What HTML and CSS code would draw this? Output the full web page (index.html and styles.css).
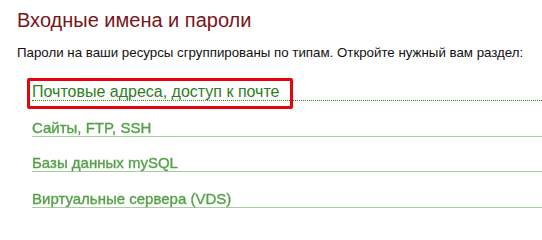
FILE: index.html
```html
<!DOCTYPE html>
<html lang="ru">
<head>
<meta charset="utf-8">
<title>Входные имена и пароли</title>
<link rel="stylesheet" href="styles.css">
</head>
<body>
<div class="page">
  <h1 class="title">Входные имена и пароли</h1>
  <p class="lead">Пароли на ваши ресурсы сгруппированы по типам. Откройте нужный вам раздел:</p>
  <ul class="groups">
    <li class="group group--active">
      <a class="group__link" href="#">Почтовые адреса, доступ к почте</a>
      <span class="highlight"></span>
    </li>
    <li class="group group--faded"><a class="group__link" href="#">Сайты, FTP, SSH</a></li>
    <li class="group group--faded"><a class="group__link" href="#">Базы данных mySQL</a></li>
    <li class="group group--faded"><a class="group__link" href="#">Виртуальные сервера (VDS)</a></li>
  </ul>
</div>
</body>
</html>
```
FILE: styles.css
```css
html, body {
  margin: 0;
  padding: 0;
  background: #ffffff;
}
body {
  font-family: "Liberation Sans", Arial, sans-serif;
}
.page {
  padding: 9px 0 0 17px;
}
.title {
  margin: 0;
  font-size: 20px;
  line-height: 23px;
  font-weight: normal;
  color: #7a1518;
}
.lead {
  margin: 13px 0 0;
  font-size: 13.3px;
  line-height: 16px;
  color: #111111;
}
.groups {
  list-style: none;
  margin: 0;
  padding: 0 0 0 15px;
}
.group {
  position: relative;
  margin-top: 17.5px;
  line-height: 17px;
}
.group:first-child {
  margin-top: 22px;
}
.group__link {
  display: block;
  text-decoration: none;
}
.group--active .group__link {
  font-size: 16px;
  color: #2f7d22;
  border-bottom: 1px dotted #2f8a22;
}
.group--faded .group__link {
  font-size: 15px;
  color: #55a048;
  -webkit-text-stroke: 0.35px #55a048;
  border-bottom: 1px solid #a4d09a;
  filter: blur(0.6px);
}
.highlight {
  position: absolute;
  left: -5.5px;
  top: -5.5px;
  width: 260px;
  height: 25px;
  border: 3px solid #e5040c;
  border-radius: 2px;
  pointer-events: none;
}
```
